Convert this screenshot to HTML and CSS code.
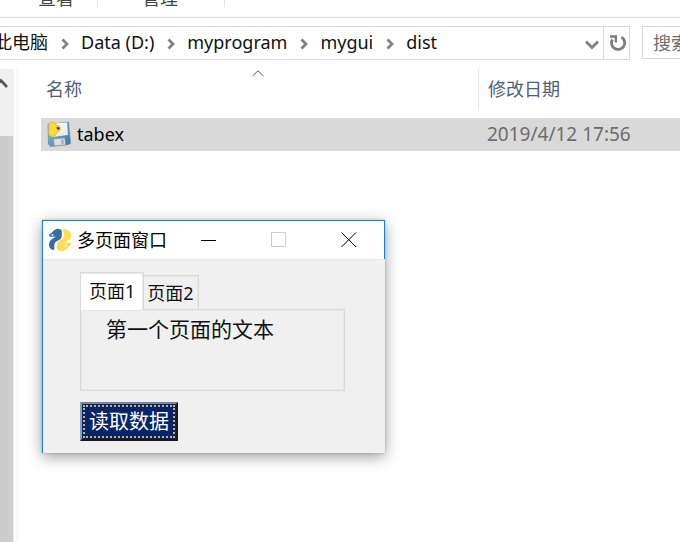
FILE: index.html
```html
<!DOCTYPE html>
<html lang="zh-CN">
<head>
<meta charset="utf-8">
<title>dist</title>
<link rel="stylesheet" href="styles.css">
</head>
<body>
<svg class="defs" aria-hidden="true">
  <symbol id="chevron" viewBox="0 0 8 12"><path d="M1.5 1.5 6 6 1.5 10.5" fill="none" stroke="#828282" stroke-width="2.8"/></symbol>
</svg>
<div class="ribbon">
  <div class="ribbon-group first"><button>查看</button></div>
  <div class="ribbon-group"><button>管理</button></div>
</div>
<div class="toolbar">
  <nav class="address" aria-label="地址">
    <a href="#">此电脑</a>
    <svg class="sep"><use href="#chevron"/></svg>
    <a href="#">Data (D:)</a>
    <svg class="sep"><use href="#chevron"/></svg>
    <a href="#">myprogram</a>
    <svg class="sep"><use href="#chevron"/></svg>
    <a href="#">mygui</a>
    <svg class="sep"><use href="#chevron"/></svg>
    <a href="#">dist</a>
    <button class="history" aria-label="历史记录"><svg width="14" height="10" viewBox="0 0 14 10"><path d="M1 1.5 7 7.5 13 1.5" fill="none" stroke="#828282" stroke-width="2.8"/></svg></button>
    <button class="refresh" aria-label="刷新"><svg width="18" height="18" viewBox="0 0 18 18"><path d="M12.5 3.2A6.600 6.600 0 1 1 3.400 5.500" fill="none" stroke="#7b7b7b" stroke-width="2.800"/><path d="M1 1.200H8V8.500H5.700V3.800H1z" fill="#7b7b7b"/></svg></button>
  </nav>
  <div class="search"><input type="text" placeholder="搜索" aria-label="搜索"></div>
</div>
<div class="browser">
  <div class="scroll">
    <svg width="13" height="12" viewBox="0 0 13 12"><path d="M-5 9 1 2.5 7 9" fill="none" stroke="#555" stroke-width="2.6"/></svg>
    <div class="thumb"></div>
  </div>
  <main class="files">
    <table>
      <thead>
        <tr>
          <th class="name"><div class="head">名称<svg class="sort" width="12" height="7" viewBox="0 0 12 7"><path d="M.5 6 6 .8 11.5 6" fill="none" stroke="#555"/></svg></div></th>
          <th class="date"><div class="head">修改日期</div></th>
        </tr>
      </thead>
      <tbody>
        <tr>
          <td class="name"><div class="file">
            <svg width="24" height="26" viewBox="0 0 24 26">
              <defs><linearGradient id="disk" x2="1" y2="1"><stop stop-color="#9ac6dc"/><stop offset="1" stop-color="#3474a5"/></linearGradient><linearGradient id="paper" y2="1"><stop stop-color="#fff"/><stop offset="1" stop-color="#e3e6ea"/></linearGradient></defs>
              <path d="M1 3.5 21.5 1l2 21.5-3 1.2L3.5 25.5 1.5 23z" fill="url(#disk)" stroke="#5c8caa" stroke-width=".7"/>
              <path d="M4 2.8 20 1.5 21 14 5 16z" fill="url(#paper)"/>
              <path d="m6.5 18 11.2-1 .8 6.8-11.3 1z" fill="#dedede" stroke="#999" stroke-width=".5"/><path d="m14 18.5 2.4-.2.5 4.5-2.4.2z" fill="#a7b1b8"/>
              <path d="M2 3.500Q2.500 1 5 1q3.500-.2 4.500 3.500Q13.500 4 13.500 7.500q0 3.500-3.700 3.500-.3 4-4.500 4.500-3.500.2-3.500-3z" fill="#fbd83c" stroke="#e9b521" stroke-width=".8"/>
              <path d="m9 5.500 3.800 1v2l-2.800.8z" fill="#b18f25"/><circle cx="11.300" cy="7.200" r="1" fill="#222"/>
            </svg>tabex</div></td>
          <td class="date">2019/4/12 17:56</td>
        </tr>
      </tbody>
    </table>
  </main>
</div>

<section class="window" aria-label="多页面窗口">
  <header class="titlebar">
    <svg class="logo" width="24" height="24" viewBox="0 0 24 24">
      <path d="M3.500 5Q6 1.500 9 .8q3-.5 4.800 1.700V8.500q-.3 2.700-3.500 4-3.800 1.200-4 4.500v3.500q0 1.800-1.600 1.500C2 21.300.8 18.500 1 16q.3-3.500 3-5l4-2.200H3Q1 8.700 1 7.200 1.500 5.700 3.500 5z" fill="#356f9f"/>
      <path d="M15.500 1.200q5 .2 7 3.300 1.500 3.500-.5 6.500l-5.500 3.500h4.800q2 .2 1.700 2-.5 1.600-2.800 2.200-2 3.800-6 4.500-4.500.3-5.500-2.700V16.500q.5-2.500 3.500-4 3.500-1.500 3.500-5.500V4Q13.500 2 15.500 1.200z" fill="#ffdc50"/>
      <circle cx="4.500" cy="7" r="1" fill="#dbe8f1"/><circle cx="18" cy="17.500" r="1" fill="#fff"/>
    </svg>
    <span class="title">多页面窗口</span>
    <button aria-label="最小化"><svg width="16" height="16"><path d="M0 8.500h15" stroke="#000"/></svg></button>
    <button aria-label="最大化" disabled><svg width="16" height="16"><path d="M.5.5h14v14H.5z" fill="none" stroke="#ccc"/></svg></button>
    <button aria-label="关闭"><svg width="16" height="16"><path d="m.5.5 14.500 14.500M15 .5.5 15" stroke="#000"/></svg></button>
  </header>
  <div class="content">
    <div class="tabs" role="tablist">
      <button class="tab active" role="tab" aria-selected="true">页面1</button>
      <button class="tab" role="tab" aria-selected="false">页面2</button>
    </div>
    <div class="panel" role="tabpanel">第一个页面的文本</div>
    <button class="read"><span>读取数据</span></button>
  </div>
</section>
</body>
</html>
```

FILE: styles.css
```css
* { box-sizing: border-box; }

body {
  margin: 0;
  height: 100vh;
  display: flex;
  flex-direction: column;
  overflow: hidden;
  background: #fff;
  color: #111;
  font: 18px/24px "Noto Sans", "Noto Sans CJK SC", sans-serif;
}

button, input {
  margin: 0;
  padding: 0;
  border: 0;
  background: none;
  color: inherit;
  font: inherit;
}

svg { display: block; flex: none; }
.defs { position: absolute; width: 0; height: 0; }

.ribbon {
  display: flex;
  height: 18px;
  flex: none;
  border-bottom: 1px solid #dadbdc;
  overflow: hidden;
}
.ribbon-group {
  width: 127px;
  height: 7px;
  padding-left: 44px;
  border-right: 1px solid #e2e3e4;
  color: #444;
}
.ribbon-group.first { width: 98px; padding-left: 38px; }
.ribbon-group button { display: block; margin-top: -14px; }

.toolbar {
  display: flex;
  flex: none;
  gap: 12px;
  padding-top: 8px;
}
.address {
  flex: 1;
  display: flex;
  align-items: center;
  height: 34px;
  border: 1px solid #d9d9d9;
  border-left: 0;
  margin-left: -6px;
}
.address a { padding-bottom: 2px; color: #111; text-decoration: none; white-space: nowrap; }
.sep { width: 8px; height: 12px; margin: 1px 12px 0 13px; }
.history { margin-left: auto; padding: 4px 4px 0 0; }
.refresh {
  display: flex;
  align-items: center;
  justify-content: center;
  align-self: stretch;
  width: 26px;
  padding-left: 2px;
  border-left: 1px solid #d9d9d9;
}
.search { width: 38px; overflow: hidden; }
.search input {
  width: 240px;
  height: 33px;
  padding: 0 10px;
  border: 1px solid #d9d9d9;
}
.search input::placeholder { color: #6d6d6d; opacity: 1; }

.browser { flex: 1; display: flex; padding-top: 9px; }
.scroll {
  width: 14px;
  display: flex;
  flex-direction: column;
  padding-top: 9px;
  background: #f0f0f0;
}
.thumb { flex: 1; width: 13px; margin-top: 46px; background: #cdcdcd; }
.files {
  flex: 1;
  margin-left: 2px;
  padding-left: 23px;
  border-left: 2px solid #f7f7f7;
}

table { width: 100%; border-spacing: 0; table-layout: fixed; }
th, td { padding: 0; text-align: left; font-weight: 400; }
th { padding-bottom: 9px; color: #4c607a; }
.head { position: relative; height: 40px; padding: 8px 0 0 5px; }
.sort { position: absolute; top: 1px; left: 50%; margin-left: -8px; }
.date { width: 202px; }
.date .head { padding-left: 9px; border-left: 1px solid #e5e5e5; }
td { height: 33px; padding-bottom: 2px; background: #d9d9d9; }
td.name { color: #000; }
td.date { padding-left: 9px; color: #6d6d6d; font-size: 19px; }
.file { display: flex; align-items: center; gap: 6px; padding-left: 6px; }

.window {
  position: absolute;
  left: 42px;
  top: 220px;
  width: 343px;
  background: #f0f0f0;
  border-left: 1px solid #1883d7;
  box-shadow: 0 4px 14px rgba(0, 0, 0, .38), 0 0 2px rgba(0, 0, 0, .25);
}
.titlebar {
  display: flex;
  align-items: center;
  height: 39px;
  padding-left: 5px;
  background: #fff;
  border-top: 1px solid #1883d7;
  border-right: 1px solid #1883d7;
  color: #000;
}
.title { flex: 1; margin-left: 5px; }
.titlebar button { display: flex; justify-content: center; width: 70px; }

.content { padding: 12px 40px 12px 37px; border-top: 1px solid #e7e7e7; }
.tabs { display: flex; align-items: flex-end; }
.tab {
  height: 34px;
  padding: 0 4px 0 3px;
  border: 1px solid #d9d9d9;
  border-left: 0;
  border-bottom: 0;
  box-shadow: inset -1px 1px #e8e8e8;
}
.tab.active {
  position: relative;
  height: 38px;
  margin-bottom: -1px;
  padding: 0 8px 2px;
  border-left: 1px solid #d9d9d9;
  background: #fff;
}
.panel {
  height: 82px;
  padding: 7px 0 0 25px;
  border: 1px solid #d9d9d9;
  box-shadow: inset 0 0 0 1px #e8e8e8;
  font-size: 21px;
}
.read {
  display: block;
  margin-top: 11px;
  padding: 1px;
  border: 2px solid #16191f;
  border-top-color: #7783a2;
  border-left-color: #8a9cbb;
  background: #0a246a;
  color: #fff;
  font-size: 20px;
}
.read span {
  display: block;
  padding: 3px 4px;
  border: 2px dotted #c5b36e;
  line-height: 23px;
}
```
